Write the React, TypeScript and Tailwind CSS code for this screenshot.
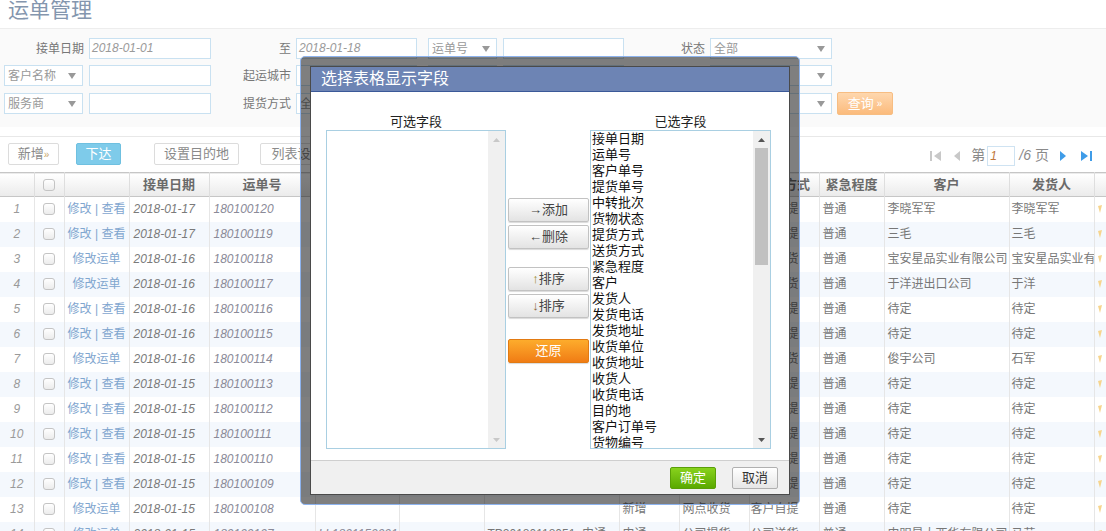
import React from 'react';

type Row = {
  n: number;
  act: 'mv' | 'yd';
  date: string;
  no: string;
  c1: string;
  c2: string;
  c3: string;
  st: string;
  rc: string;
  pk: string;
  cust: string;
  sender: string;
};

// rows 1-12 sit mostly under the dialog, only the visible columns carry text
const mk = (n: number, act: 'mv' | 'yd', date: string, pk: string, cust = '待定', sender = '待定'): Row => ({
  n,
  act,
  date,
  no: String(180100121 - n),
  c1: '',
  c2: '',
  c3: '',
  st: n >= 13 ? '新增' : '',
  rc: n >= 13 ? '网点收货' : '',
  pk,
  cust,
  sender,
});

const ROWS: Row[] = [
  mk(1, 'mv', '2018-01-17', '客户自提', '李晓军军', '李晓军军'),
  mk(2, 'mv', '2018-01-17', '客户自提', '三毛', '三毛'),
  mk(3, 'yd', '2018-01-16', '公司送货', '宝安星品实业有限公司', '宝安星品实业有限公司'),
  mk(4, 'yd', '2018-01-16', '公司送货', '于洋进出口公司', '于洋'),
  mk(5, 'mv', '2018-01-16', '客户自提'),
  mk(6, 'mv', '2018-01-16', '客户自提'),
  mk(7, 'yd', '2018-01-16', '公司送货', '俊宇公司', '石军'),
  mk(8, 'mv', '2018-01-15', '客户自提'),
  mk(9, 'mv', '2018-01-15', '客户自提'),
  mk(10, 'mv', '2018-01-15', '客户自提'),
  mk(11, 'mv', '2018-01-15', '客户自提'),
  mk(12, 'mv', '2018-01-15', '客户自提'),
  mk(13, 'yd', '2018-01-15', '客户自提'),
  {
    ...mk(14, 'yd', '2018-01-15', '公司送货', '申明星大西华有限公司', '马芸'),
    c1: 'LL1801150001',
    c3: 'TP20180118051_申通',
    st: '申通',
    rc: '公司提货',
  },
];

const SELECTED = [
  '接单日期', '运单号', '客户单号', '提货单号', '中转批次', '货物状态', '提货方式', '送货方式',
  '紧急程度', '客户', '发货人', '发货电话', '发货地址', '收货单位', '收货地址', '收货人',
  '收货电话', '目的地', '客户订单号', '货物编号', '货物名称',
];

const Caret = ({ className = '' }: { className?: string }) => (
  <svg width="8" height="6" viewBox="0 0 8 6" className={className}>
    <polygon points="0,0 8,0 4,6" fill="currentColor" />
  </svg>
);

const Input = ({ w, value }: { w: string; value?: string }) => (
  <div className={`${w} h-[21px] border border-[#c9e1f1] bg-white pl-[2px] text-[12px] leading-[19px] italic text-[#9a9a9a]`}>
    {value}
  </div>
);

const Select = ({ w, value }: { w: string; value: string }) => (
  <div className={`${w} h-[21px] border border-[#c9e1f1] bg-white flex items-center justify-between pl-[3px] pr-[6px] text-[12px] text-[#999]`}>
    <span>{value}</span>
    <Caret className="text-[#999]" />
  </div>
);

const Label = ({ w, text }: { w: string; text: string }) => (
  <div className={`${w} text-right pr-[5px] text-[12px] text-[#777]`}>{text}</div>
);

const Checkbox = () => (
  <div className="mx-auto w-[12px] h-[12px] rounded-[3px] border border-[#c4c4c4] bg-linear-to-b from-white to-[#ececec]" />
);

const ToolBtn = ({ children, className = '' }: { children: React.ReactNode; className?: string }) => (
  <div className={`h-[22px] flex items-center justify-center rounded-[2px] border text-[13px] ${className}`}>
    {children}
  </div>
);

const ScrollArrow = ({ up, color }: { up?: boolean; color: string }) => (
  <div className={`h-[17px] flex items-center justify-center ${color}`}>
    <svg width="7" height="4" viewBox="0 0 7 4">
      <polygon points={up ? '0,4 7,4 3.5,0' : '0,0 7,0 3.5,4'} fill="currentColor" />
    </svg>
  </div>
);

const DlgBtn = ({ children, className = '' }: { children: React.ReactNode; className?: string }) => (
  <div className={`h-[24px] flex items-center justify-center rounded-[2px] border text-[13px] shadow-[0_1px_1px_rgba(0,0,0,0.15)] ${className}`}>
    {children}
  </div>
);

const FieldDialog = () => (
  <div className="absolute left-[300px] top-[56px] w-[500px] h-[449px] rounded-[5px] border border-[#8db3ee] bg-black/50 p-[9px]">
    <div className="w-full h-full flex flex-col border border-[#4a4a4a] bg-white">
      <div className="h-[25px] shrink-0 bg-[#6d84b4] border-b border-[#3b5998] pl-[10px] text-[16px] leading-[24px] text-white">
        选择表格显示字段
      </div>
      <div className="flex px-[15px] pt-[22px]">
        {/* available */}
        <div className="w-[180px] flex flex-col">
          <div className="h-[16px] text-center text-[13px] leading-[16px] text-[#222]">可选字段</div>
          <div className="h-[319px] flex border border-[#a9cfe2] bg-white">
            <div className="flex-1" />
            <div className="w-[17px] flex flex-col justify-between bg-[#f0f0f0]">
              <ScrollArrow up color="text-[#c8c8c8]" />
              <ScrollArrow color="text-[#c8c8c8]" />
            </div>
          </div>
        </div>

        {/* actions */}
        <div className="w-[81px] ml-[2px] pt-[84px] flex flex-col">
          <DlgBtn className="border-[#c2c2c2] bg-linear-to-b from-white to-[#e3e3e3] text-[#444]">→添加</DlgBtn>
          <DlgBtn className="mt-[3px] border-[#c2c2c2] bg-linear-to-b from-white to-[#e3e3e3] text-[#444]">←删除</DlgBtn>
          <DlgBtn className="mt-[18px] border-[#c2c2c2] bg-linear-to-b from-white to-[#e3e3e3] text-[#444]">
            <span className="text-[#9a8a2a]">↑</span>排序
          </DlgBtn>
          <DlgBtn className="mt-[3px] border-[#c2c2c2] bg-linear-to-b from-white to-[#e3e3e3] text-[#444]">
            <span className="text-[#8a6a3a]">↓</span>排序
          </DlgBtn>
          <DlgBtn className="mt-[21px] border-[#e27a12] bg-linear-to-b from-[#fdac2c] to-[#f07c14] text-white">还原</DlgBtn>
        </div>

        {/* selected */}
        <div className="w-[181px] ml-[1px] flex flex-col">
          <div className="h-[16px] text-center text-[13px] leading-[16px] text-[#222]">已选字段</div>
          <div className="h-[319px] flex border border-[#a9cfe2] bg-white overflow-hidden">
            <div className="flex-1 overflow-hidden pl-[1px] text-[13px] leading-[16px] text-[#111]">
              {SELECTED.map((f) => (
                <div key={f} className="h-[16px] whitespace-nowrap">{f}</div>
              ))}
            </div>
            <div className="w-[17px] flex flex-col bg-[#f0f0f0]">
              <ScrollArrow up color="text-[#555]" />
              <div className="mx-[2px] h-[117px] bg-[#c1c1c1]" />
              <div className="flex-1" />
              <ScrollArrow color="text-[#555]" />
            </div>
          </div>
        </div>
      </div>

      <div className="mt-auto h-[34px] shrink-0 border-t border-[#cfcfcf] bg-[#f0f0f0] flex justify-end items-start pt-[6px] pr-[11px] gap-[16px]">
        <div className="w-[46px] h-[22px] flex items-center justify-center rounded-[2px] border border-[#5a9f08] bg-linear-to-b from-[#88d21c] to-[#5aa900] text-[13px] text-white">
          确定
        </div>
        <div className="w-[46px] h-[22px] flex items-center justify-center rounded-[2px] border border-[#b0b0b0] bg-linear-to-b from-white to-[#e6e6e6] text-[13px] text-[#333]">
          取消
        </div>
      </div>
    </div>
  </div>
);

const PageIcon = ({ kind, color }: { kind: 'first' | 'prev' | 'next' | 'last'; color: string }) => (
  <svg width={kind === 'first' || kind === 'last' ? 12 : 7} height="12" viewBox={kind === 'first' || kind === 'last' ? '0 0 12 12' : '0 0 7 12'} className={color}>
    {kind === 'first' && (
      <>
        <rect x="0" y="1" width="2" height="10" fill="currentColor" />
        <polygon points="11,1 4,6 11,11" fill="currentColor" />
      </>
    )}
    {kind === 'prev' && <polygon points="7,1 1,6 7,11" fill="currentColor" />}
    {kind === 'next' && <polygon points="0,1 6,6 0,11" fill="currentColor" />}
    {kind === 'last' && (
      <>
        <polygon points="1,1 8,6 1,11" fill="currentColor" />
        <rect x="10" y="1" width="2" height="10" fill="currentColor" />
      </>
    )}
  </svg>
);

const App = () => {
  return (
    <div className="relative w-[1106px] h-[531px] overflow-hidden bg-white font-['Liberation_Sans','Noto_Sans_CJK_SC',sans-serif]">
      {/* Title */}
      <div className="h-[29px] border-b border-[#ededed] pl-[8px] text-[21px] leading-[19px] text-[#8496ae]">运单管理</div>

      {/* Filters */}
      <div className="bg-[#fafafa] pt-[9px] pb-[12px] flex flex-col gap-[6px]">
        <div className="flex items-center">
          <Label w="w-[89px]" text="接单日期" />
          <Input w="w-[122px]" value="2018-01-01" />
          <Label w="w-[85px]" text="至" />
          <Input w="w-[121px]" value="2018-01-18" />
          <div className="w-[11px]" />
          <Select w="w-[69px]" value="运单号" />
          <div className="w-[6px]" />
          <Input w="w-[121px]" />
          <Label w="w-[86px]" text="状态" />
          <Select w="w-[122px]" value="全部" />
        </div>
        <div className="flex items-center">
          <div className="w-[4px]" />
          <Select w="w-[79px]" value="客户名称" />
          <div className="w-[6px]" />
          <Input w="w-[122px]" />
          <Label w="w-[85px]" text="起运城市" />
          <Input w="w-[121px]" />
          <div className="w-[11px]" />
          <Select w="w-[69px]" value="" />
          <div className="w-[6px]" />
          <Input w="w-[121px]" />
          <Label w="w-[86px]" text="" />
          <Select w="w-[122px]" value="" />
        </div>
        <div className="flex items-center">
          <div className="w-[4px]" />
          <Select w="w-[79px]" value="服务商" />
          <div className="w-[6px]" />
          <Input w="w-[122px]" />
          <Label w="w-[85px]" text="提货方式" />
          <Select w="w-[121px]" value="全部" />
          <div className="w-[11px]" />
          <Select w="w-[69px]" value="" />
          <div className="w-[6px]" />
          <Input w="w-[121px]" />
          <Label w="w-[86px]" text="" />
          <Select w="w-[122px]" value="" />
          <div className="w-[5px]" />
          <div className="w-[56px] h-[23px] flex items-center justify-center gap-[3px] rounded-[2px] border border-[#f7bd82] bg-linear-to-b from-[#fed7ae] to-[#fbbb7c] text-[13px] text-white">
            查询 <span className="text-[10px]">»</span>
          </div>
        </div>
      </div>

      {/* Toolbar */}
      <div className="mt-[9px] border-t border-[#e8e8e8] h-[36px] flex items-start pt-[6px] pl-[8px] pr-[14px]">
        <ToolBtn className="w-[51px] border-[#dcdcdc] bg-white text-[#8a8a8a]">
          新增<span className="text-[10px] text-[#c9a86a]">»</span>
        </ToolBtn>
        <ToolBtn className="ml-[17px] w-[45px] border-[#6fc0e0] bg-[#7ecbea] text-white">下达</ToolBtn>
        <ToolBtn className="ml-[33px] w-[85px] border-[#dcdcdc] bg-white text-[#8a8a8a]">设置目的地</ToolBtn>
        <ToolBtn className="ml-[21px] w-[75px] border-[#dcdcdc] bg-white text-[#8a8a8a]">列表设置</ToolBtn>
        <div className="ml-auto mt-[2px] flex items-center text-[14px] text-[#8a8a8a]">
          <PageIcon kind="first" color="text-[#c8c8c8]" />
          <div className="w-[11px]" />
          <PageIcon kind="prev" color="text-[#c8c8c8]" />
          <span className="ml-[11px]">第</span>
          <div className="ml-[2px] w-[28px] h-[20px] border border-[#cfe3f2] bg-white pl-[2px] text-[12px] leading-[18px] italic text-[#c0783c]">1</div>
          <span className="ml-[4px] italic">/6</span>
          <span className="ml-[4px]">页</span>
          <div className="w-[11px]" />
          <PageIcon kind="next" color="text-[#3f9ce8]" />
          <div className="w-[13px]" />
          <PageIcon kind="last" color="text-[#3f9ce8]" />
        </div>
      </div>

      {/* Grid */}
      <table className="w-[1134px] table-fixed border-collapse text-[12px]">
        <colgroup>
          <col className="w-[34px]" />
          <col className="w-[30px]" />
          <col className="w-[65px]" />
          <col className="w-[80px]" />
          <col className="w-[106px]" />
          <col className="w-[84px]" />
          <col className="w-[85px]" />
          <col className="w-[135px]" />
          <col className="w-[60px]" />
          <col className="w-[70px]" />
          <col className="w-[70px]" />
          <col className="w-[65px]" />
          <col className="w-[125px]" />
          <col className="w-[85px]" />
          <col className="w-[40px]" />
        </colgroup>
        <thead>
          <tr className="h-[24px] border-t border-b border-[#c6c6c6] bg-linear-to-b from-white to-[#ebebeb] text-[13px] font-bold text-[#6a6a6a]">
            <th className="border-r border-[#dedede]" />
            <th className="border-r border-[#dedede]"><Checkbox /></th>
            <th className="border-r border-[#dedede]" />
            <th className="border-r border-[#dedede]">接单日期</th>
            <th className="border-r border-[#dedede]">运单号</th>
            <th className="border-r border-[#dedede]" />
            <th className="border-r border-[#dedede]" />
            <th className="border-r border-[#dedede]" />
            <th className="border-r border-[#dedede]" />
            <th className="border-r border-[#dedede]" />
            <th className="border-r border-[#dedede]">提货方式</th>
            <th className="border-r border-[#dedede]">紧急程度</th>
            <th className="border-r border-[#dedede]">客户</th>
            <th className="border-r border-[#dedede]">发货人</th>
            <th />
          </tr>
        </thead>
        <tbody>
          {ROWS.map((r) => (
            <tr key={r.n} className={`h-[25px] ${r.n % 2 === 0 ? 'bg-[#f4f8fd]' : 'bg-white'}`}>
              <td className="border-r border-[#e6e6e6] text-center italic text-[#9a9a9a]">{r.n}</td>
              <td className="border-r border-[#e6e6e6]"><Checkbox /></td>
              <td className="border-r border-[#e6e6e6] text-center whitespace-nowrap text-[#7fa6cf]">
                {r.act === 'mv' ? '修改 | 查看' : '修改运单'}
              </td>
              <td className="border-r border-[#e6e6e6] pl-[4px] italic text-[#7a7a7a]">{r.date}</td>
              <td className="border-r border-[#e6e6e6] pl-[4px] italic text-[#8a8a98]">{r.no}</td>
              <td className="border-r border-[#e6e6e6] pl-[3px] whitespace-nowrap overflow-hidden italic text-[#8a8a98]">{r.c1}</td>
              <td className="border-r border-[#e6e6e6] pl-[3px] whitespace-nowrap overflow-hidden text-[#777]">{r.c2}</td>
              <td className="border-r border-[#e6e6e6] pl-[3px] whitespace-nowrap overflow-hidden text-[#777]">{r.c3}</td>
              <td className="border-r border-[#e6e6e6] pl-[3px] whitespace-nowrap overflow-hidden text-[#777]">{r.st}</td>
              <td className="border-r border-[#e6e6e6] pl-[3px] whitespace-nowrap overflow-hidden text-[#777]">{r.rc}</td>
              <td className="border-r border-[#e6e6e6] pl-[1px] whitespace-nowrap overflow-hidden text-[#777]">{r.pk}</td>
              <td className="border-r border-[#e6e6e6] pl-[3px] whitespace-nowrap overflow-hidden text-[#777]">普通</td>
              <td className="border-r border-[#e6e6e6] pl-[3px] whitespace-nowrap overflow-hidden text-[#777]">{r.cust}</td>
              <td className="border-r border-[#e6e6e6] pl-[2px] whitespace-nowrap overflow-hidden text-[#777]">{r.sender}</td>
              <td className="pl-[2px]">
                <svg width="6" height="10" viewBox="0 0 6 10">
                  <polygon points="1,2 5,1 3,9" fill="#f6d58e" />
                </svg>
              </td>
            </tr>
          ))}
        </tbody>
      </table>

      <FieldDialog />
    </div>
  );
};

export default App;
